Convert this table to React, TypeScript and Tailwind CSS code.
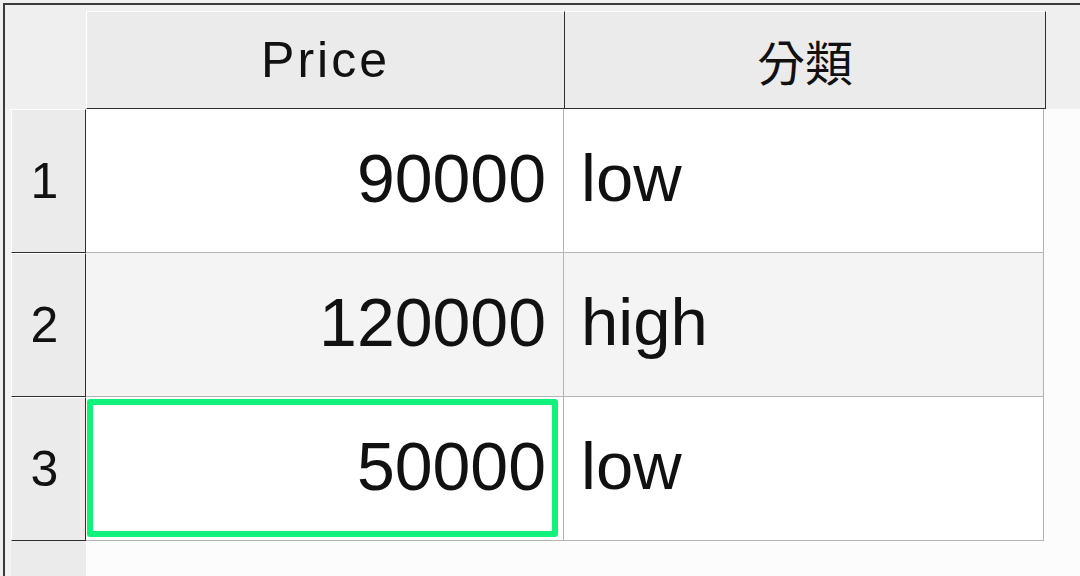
const rows = [
  { n: "1", price: "90000", cls: "low", bg: "bg-white" },
  { n: "2", price: "120000", cls: "high", bg: "bg-[#f4f4f4]" },
  { n: "3", price: "50000", cls: "low", bg: "bg-white", selected: true },
];

export default function App() {
  return (
    <div className="h-[576px] w-[1080px] overflow-hidden bg-[#efefef] pl-[3px] pt-[3px] font-['Liberation_Sans',Arial,sans-serif] text-[#111]">
      <div className="flex h-full flex-col border-l-2 border-t-2 border-[#3a3a3a] bg-[#fcfcfc]">
        {/* column headers */}
        <div className="flex h-[104px] shrink-0 bg-[#efefef]">
          <div className="w-[81px] shrink-0" />
          <div className="mt-[6px] flex w-[479px] shrink-0 items-center justify-center border-b border-l border-r border-t border-b-[#2e2e2e] border-l-white border-r-[#2e2e2e] border-t-white bg-[#ebebeb] text-[50px] leading-none tracking-[3px]">
            Price
          </div>
          <div className="mt-[6px] flex w-[481px] shrink-0 items-center justify-center border-b border-r border-t border-b-[#2e2e2e] border-r-[#2e2e2e] border-t-white bg-[#ebebeb] font-['Noto_Sans_CJK_TC','Noto_Sans_CJK_JP',sans-serif] text-[48px] leading-none">
            分類
          </div>
        </div>

        {rows.map((r) => (
          <div key={r.n} className="flex h-[144px] shrink-0">
            <div className="w-[6px] shrink-0 bg-[#f3f3f3]" />
            <div className="flex w-[75px] shrink-0 items-center justify-center border-b border-l border-r border-t border-b-[#2e2e2e] border-l-white border-r-[#2e2e2e] border-t-white bg-[#ebebeb] pr-[8px] text-[50px] leading-none">
              {r.n}
            </div>
            <div className={`relative flex w-[478px] shrink-0 items-center justify-end border-b border-r border-[#b4b4b4] pb-[6px] pr-[17px] text-[68px] leading-none ${r.bg}`}>
              {r.price}
              {r.selected && (
                <div className="absolute bottom-[3px] left-[1px] right-[5px] top-[2px] rounded-[3px] border-[6px] border-[#10f27a]" />
              )}
            </div>
            <div className={`flex w-[480px] shrink-0 items-center border-b border-r border-[#b4b4b4] pb-[6px] pl-[17px] text-[67px] leading-none ${r.bg}`}>
              {r.cls}
            </div>
          </div>
        ))}

        <div className="flex flex-1">
          <div className="w-[6px] shrink-0 bg-[#f3f3f3]" />
          <div className="w-[75px] shrink-0 bg-[#ebebeb]" />
        </div>
      </div>
    </div>
  );
}
